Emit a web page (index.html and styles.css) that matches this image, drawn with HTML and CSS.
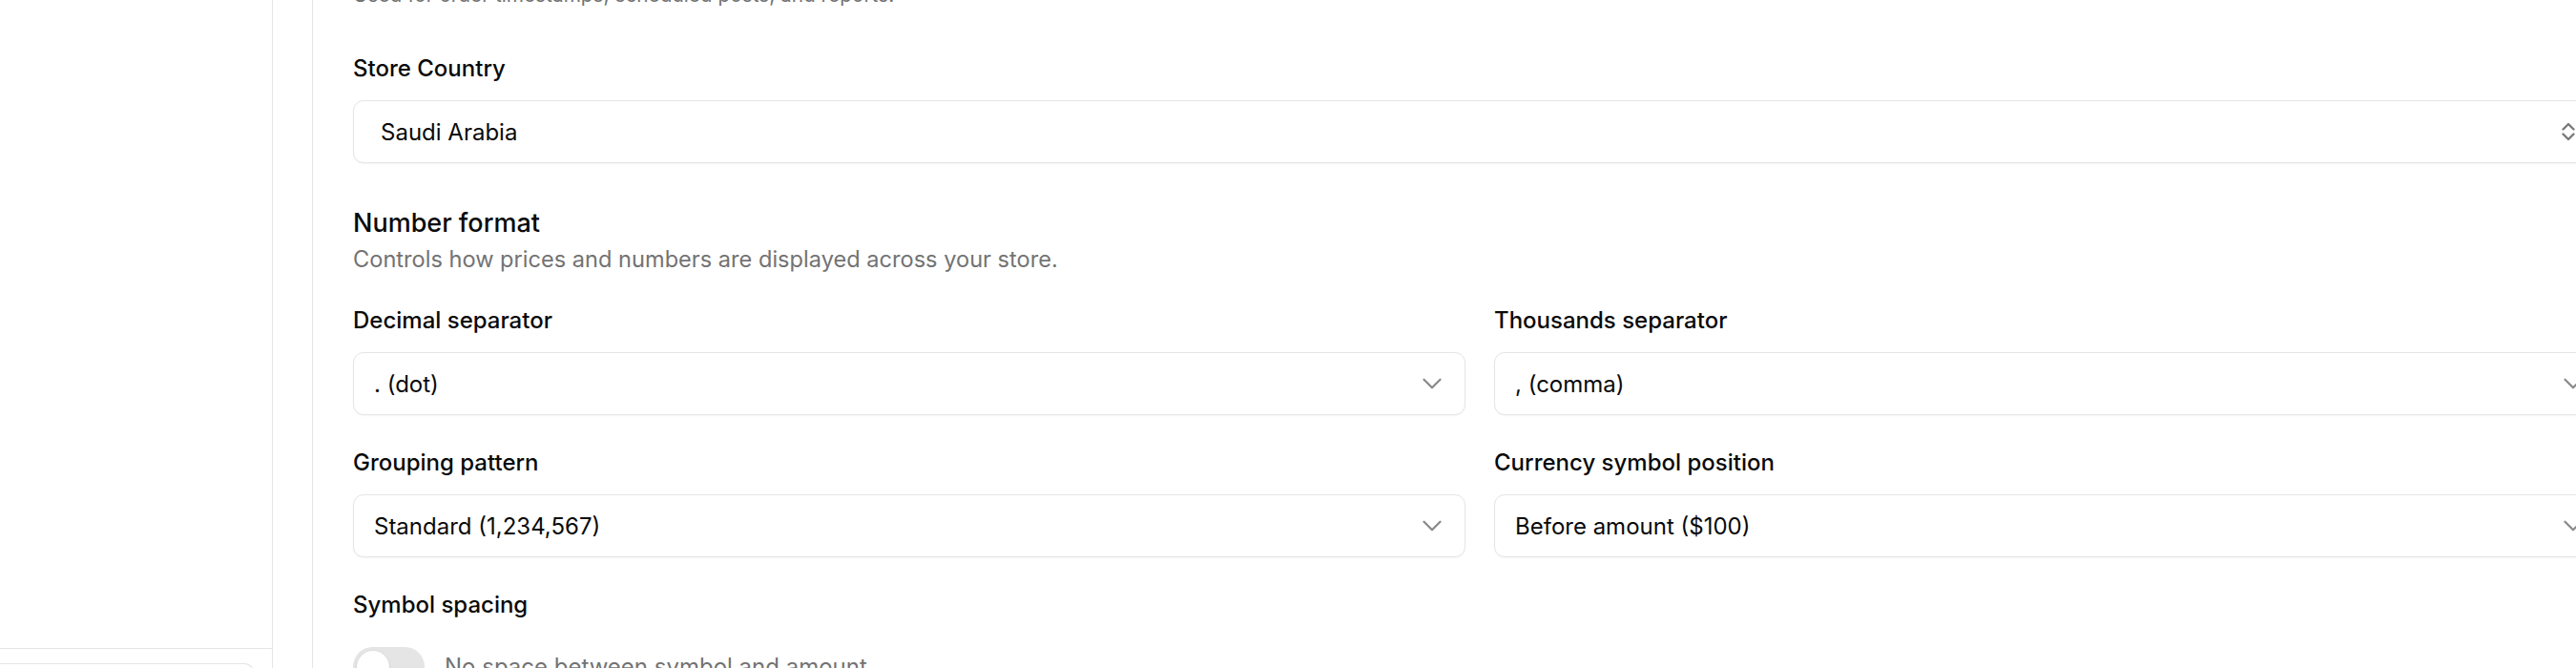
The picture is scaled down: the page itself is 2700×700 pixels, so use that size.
FILE: index.html
```html
<!DOCTYPE html>
<html lang="en">
<head>
  <meta charset="UTF-8">
  <meta name="viewport" content="width=device-width, initial-scale=1.0">
  <title>Store Settings</title>
  <link rel="stylesheet" href="styles.css">
</head>
<body>
  <div class="app">
    <!-- Left navigation (scrolled, only the footer edge is visible) -->
    <aside class="sidebar">
      <div class="sidebar-nav"></div>
      <div class="sidebar-footer">
        <div class="store-switch"></div>
      </div>
    </aside>

    <!-- Settings panel -->
    <main class="main">
      <div class="card">
        <div class="card-body">
          <p class="hint">Used for order timestamps, scheduled posts, and reports.</p>

          <!-- Store country -->
          <div class="field field-country">
            <label class="field-label">Store Country</label>
            <button type="button" class="select select-native">
              <span>Saudi Arabia</span>
              <svg class="icon-updown" width="14" height="20" viewBox="0 0 14 20" fill="none" stroke="currentColor" stroke-width="2.4" stroke-linecap="round" stroke-linejoin="round">
                <path d="M1.5 7.5 7 2l5.5 5.5"/>
                <path d="M1.5 12.5 7 18l5.5-5.5"/>
              </svg>
            </button>
          </div>

          <!-- Number format -->
          <section class="number-format">
            <h3 class="section-title">Number format</h3>
            <p class="section-desc">Controls how prices and numbers are displayed across your store.</p>

            <div class="format-grid">
              <div class="field">
                <label class="field-label">Decimal separator</label>
                <button type="button" class="select">
                  <span>. (dot)</span>
                  <svg class="icon-chevron" width="34" height="34" viewBox="0 0 24 24" fill="none" stroke="currentColor" stroke-width="1.6" stroke-linecap="round" stroke-linejoin="round"><path d="m6 9 6 6 6-6"/></svg>
                </button>
              </div>
              <div class="field">
                <label class="field-label">Thousands separator</label>
                <button type="button" class="select">
                  <span>, (comma)</span>
                  <svg class="icon-chevron" width="34" height="34" viewBox="0 0 24 24" fill="none" stroke="currentColor" stroke-width="1.6" stroke-linecap="round" stroke-linejoin="round"><path d="m6 9 6 6 6-6"/></svg>
                </button>
              </div>
              <div class="field">
                <label class="field-label">Grouping pattern</label>
                <button type="button" class="select">
                  <span>Standard (1,234,567)</span>
                  <svg class="icon-chevron" width="34" height="34" viewBox="0 0 24 24" fill="none" stroke="currentColor" stroke-width="1.6" stroke-linecap="round" stroke-linejoin="round"><path d="m6 9 6 6 6-6"/></svg>
                </button>
              </div>
              <div class="field">
                <label class="field-label">Currency symbol position</label>
                <button type="button" class="select">
                  <span>Before amount ($100)</span>
                  <svg class="icon-chevron" width="34" height="34" viewBox="0 0 24 24" fill="none" stroke="currentColor" stroke-width="1.6" stroke-linecap="round" stroke-linejoin="round"><path d="m6 9 6 6 6-6"/></svg>
                </button>
              </div>
            </div>

            <div class="field field-spacing">
              <label class="field-label">Symbol spacing</label>
              <div class="switch-row">
                <span class="switch"><span class="switch-thumb"></span></span>
                <span class="switch-text">No space between symbol and amount</span>
              </div>
            </div>
          </section>
        </div>
      </div>
    </main>
  </div>
</body>
</html>
```

FILE: styles.css
```css
/* Page base */
html, body {
  margin: 0;
  overflow: hidden;
  background-color: #fff;
}

body {
  font-family: Inter, "Noto Sans", sans-serif;
  color: #0a0a0a;
}

.app {
  display: flex;
  width: max-content;
  height: 778px;
}

/* Sidebar */
.sidebar {
  width: 285px;
  flex-shrink: 0;
  border-right: 1px solid #e5e5e5;
  display: flex;
  flex-direction: column;
}

.sidebar-nav {
  flex: 1;
}

.sidebar-footer {
  border-top: 1px solid #e5e5e5;
  padding: 15px 18px 15px 0;
}

.store-switch {
  height: 66px;
  border: 1px solid #e5e5e5;
  border-left: none;
  border-radius: 0 11px 11px 0;
}

/* Main panel */
.main {
  padding-left: 41px;
}

.card {
  border-left: 1px solid #e5e5e5;
  padding: 0 42px;
}

.card-body {
  width: 2362px;
  margin-top: -19px;
}

.hint {
  margin: 0;
  font-size: 20.8px;
  line-height: 28px;
  color: #737373;
}

/* Fields */
.field {
  display: flex;
  flex-direction: column;
  gap: 16px;
}

.field-country {
  margin-top: 46px;
}

.field-label {
  display: block;
  font-size: 24px;
  line-height: 34px;
  font-weight: 500;
}

.select {
  width: 100%;
  height: 66px;
  display: flex;
  align-items: center;
  justify-content: space-between;
  padding: 0 17px 0 21px;
  border: 1px solid #e5e5e5;
  border-radius: 11px;
  background-color: #fff;
  box-shadow: 0 1px 2px rgba(0, 0, 0, 0.04);
  font-family: inherit;
  font-size: 24px;
  color: #0a0a0a;
  text-align: left;
  box-sizing: border-box;
}

.select-native {
  padding: 0 32px 0 28px;
}

.icon-chevron {
  color: #8a8a8a;
}

.icon-updown {
  color: #7a7a7a;
}

/* Number format section */
.number-format {
  margin-top: 42px;
}

.section-title {
  margin: 0;
  font-size: 27px;
  line-height: 41px;
  font-weight: 500;
}

.section-desc {
  margin: 1px 0 0;
  font-size: 23.6px;
  line-height: 34px;
  color: #737373;
}

.format-grid {
  display: grid;
  grid-template-columns: 1fr 1fr;
  column-gap: 30px;
  row-gap: 33px;
  margin-top: 30px;
}

.field-spacing {
  margin-top: 33px;
  gap: 27px;
}

/* Toggle switch */
.switch-row {
  display: flex;
  align-items: center;
  gap: 21px;
}

.switch {
  width: 75px;
  height: 41px;
  border-radius: 999px;
  background-color: #e5e5e5;
  display: flex;
  align-items: center;
  padding: 0 4px;
  box-sizing: border-box;
}

.switch-thumb {
  width: 34px;
  height: 34px;
  border-radius: 50%;
  background-color: #fff;
  box-shadow: 0 1px 3px rgba(0, 0, 0, 0.15);
}

.switch-text {
  font-size: 24px;
  line-height: 34px;
  color: #737373;
}
```
